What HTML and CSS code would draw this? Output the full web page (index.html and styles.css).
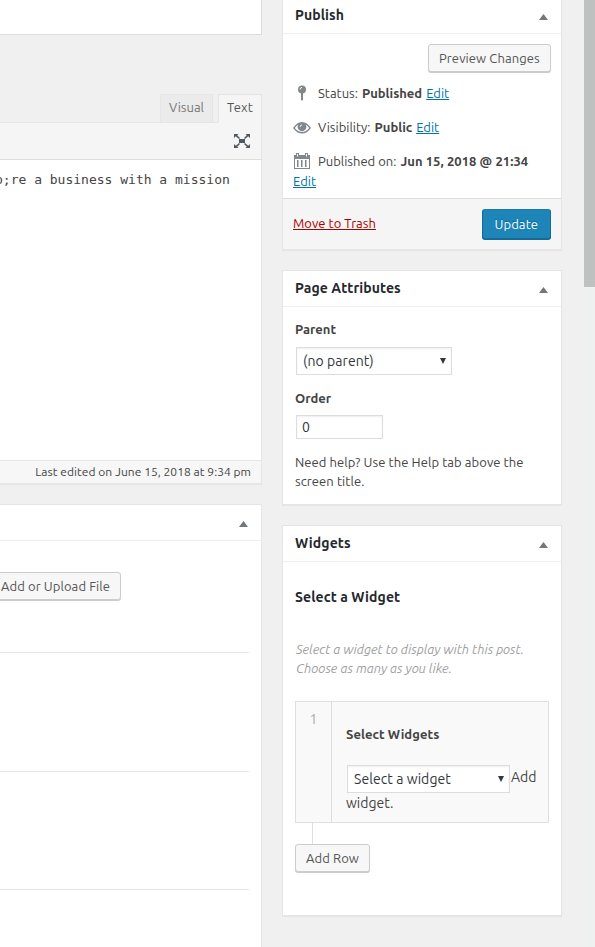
FILE: index.html
```html
<!DOCTYPE html>
<html lang="en">
<head>
<meta charset="utf-8">
<title>Edit Page</title>
<link rel="stylesheet" href="styles.css">
</head>
<body>
<div class="page">
  <main class="main-column">
    <div class="title-field"></div>
    <section class="editor">
      <div class="tabs">
        <span class="tab">Visual</span>
        <span class="tab tab-active">Text</span>
      </div>
      <div class="toolbar">
        <svg class="expand" viewBox="0 0 18 16" width="18" height="16"><path d="M6 6h6v4H6zM1 1h4.500L4.200 2.300 7 5 6 6 2.800 3.300 1 5zM17 1v4l-1.800-1.700L12 6l-1-1 2.800-2.700L12.500 1zM1 15v-4l1.800 1.700L6 10l1 1-2.800 2.700L5.500 15zM17 15h-4.500l1.300-1.300L11 11l1-1 3.200 2.700L17 11z"/></svg>
      </div>
      <div class="textarea"><span class="code">p;re a business with a mission</span></div>
      <div class="statusbar">Last edited on June 15, 2018 at 9:34 pm</div>
    </section>
    <section class="box files">
      <header class="box-head"><span></span><i class="arrow"></i></header>
      <div class="file-row file-first"><button class="button upload">Add or Upload File</button></div>
      <div class="file-row"></div>
      <div class="file-row file-short"></div>
    </section>
  </main>
  <aside class="side-column">
    <section class="box publish">
      <header class="box-head"><h2>Publish</h2><i class="arrow"></i></header>
      <div class="preview"><button class="button">Preview Changes</button></div>
      <div class="misc">
        <svg class="icon" viewBox="0 0 20 20" width="20" height="20"><circle cx="10" cy="6.500" r="4"/><path d="M9 10h2v6.500L10 18l-1-1.500z"/><path class="shine" d="M8 6.500Q8 4.600 10 4.400"/></svg>
        <span>Status:</span> <b>Published</b> <a>Edit</a>
      </div>
      <div class="misc">
        <svg class="icon" viewBox="0 0 20 20" width="20" height="20"><path fill-rule="evenodd" d="M1 11Q5 5 10 5t9 6q-4 5.500-9 5.500t-9-5.500zm1.800 0q3.200 4 7.200 4t7.200-4q-1.600-2.400-3.600-3.500a4.300 4.300 0 1 1-7.200 0Q4.400 8.600 2.800 11z"/><circle cx="10" cy="10" r="3.600"/><path class="shine" d="M8.200 9.800Q8.200 8 10 8"/></svg>
        <span>Visibility:</span> <b>Public</b> <a>Edit</a>
      </div>
      <div class="misc">
        <svg class="icon" viewBox="0 0 20 20" width="20" height="20"><path fill-rule="evenodd" d="M2 4h2V2h3v2h6V2h3v2h2v14H2zm1 4v9h14V8zM5 3v2.500h1V3zm9 0v2.500h1V3z"/><path d="M5 9h1.500v7H5zM9 9h1.500v7H9zM13 9h1.500v7H13z"/></svg>
        <span>Published on:</span> <b class="date">Jun 15, 2018 @ 21:34</b>
      </div>
      <div class="date-edit"><a>Edit</a></div>
      <footer class="actions"><a class="trash">Move to Trash</a><button class="button primary">Update</button></footer>
    </section>
    <section class="box attributes">
      <header class="box-head"><h2>Page Attributes</h2><i class="arrow"></i></header>
      <div class="attr-body">
        <div class="label"><b>Parent</b></div>
        <div class="select parent-select"><span>(no parent)</span><i class="caret"></i></div>
        <div class="label order-label"><b>Order</b></div>
        <div class="input">0</div>
        <p class="help">Need help? Use the Help tab above the<br>screen title.</p>
      </div>
    </section>
    <section class="box widgets">
      <header class="box-head"><h2>Widgets</h2><i class="arrow"></i></header>
      <div class="widgets-body">
        <h3>Select a Widget</h3>
        <p class="hint">Select a widget to display with this post.<br>Choose as many as you like.</p>
        <div class="repeater">
          <div class="order">1</div>
          <div class="fields">
            <div class="field-label"><b>Select Widgets</b></div>
            <div class="field-line"><div class="select"><span>Select a widget</span><i class="caret"></i></div><span>Add</span></div>
            <div class="field-tail">widget.</div>
          </div>
        </div>
        <div class="stem"></div>
        <button class="button add-row">Add Row</button>
      </div>
    </section>
  </aside>
  <div class="scroll-track"><div class="scroll-thumb"></div></div>
</div>
</body>
</html>
```
FILE: styles.css
```css
* { box-sizing: border-box; }
body {
  margin: 0;
  background: #f0f0f0;
  color: #444;
  font: 13px/20px Ubuntu, "Noto Sans", sans-serif;
}
h2, h3, p { margin: 0; }
h2, h3 { color: #23282d; font-size: 14px; font-weight: 600; letter-spacing: .09px; }
b { font-weight: 600; }
span, b, a, h2 { white-space: nowrap; }
a { color: #0073aa; text-decoration: underline; }
.page { display: flex; width: 595px; height: 947px; overflow: hidden; }
.main-column { width: 262px; overflow: hidden; }
.side-column { width: 280px; margin-left: 20px; }
.scroll-track { width: 11px; margin-left: 22px; background: #eff1f1; }
.scroll-thumb { height: 287px; background: #bfc1c0; }

.box { background: #fff; border: 1px solid #e5e5e5; box-shadow: 0 1px 1px rgba(0,0,0,.04); }
.box-head { display: flex; justify-content: space-between; height: 36px; padding: 0 13px 0 12px; border-bottom: 1px solid #eee; line-height: 34px; }
.arrow { width: 9px; height: 6px; margin-top: 16px; background: #72777c; clip-path: polygon(50% 0, 100% 100%, 0 100%); }

.title-field { height: 35px; background: #fff; border: 1px solid #ddd; border-width: 0 1px 1px 0; }
.tabs { display: flex; justify-content: flex-end; gap: 5px; height: 28px; margin-top: 59px; }
.tab { height: 28px; border: 1px solid #e5e5e5; border-bottom: 0; background: #ebebeb; color: #777; width: 53px; padding-left: 8px; line-height: 25px; }
.tab-active { position: relative; width: 44px; height: 29px; background: #f5f5f5; color: #555; letter-spacing: .1px; }
.toolbar { display: flex; justify-content: flex-end; height: 38px; padding: 10px 10px 0 0; background: #f5f5f5; border: 1px solid #e5e5e5; border-left: 0; border-bottom-color: #ddd; }
.expand { fill: #50575e; }
.textarea { height: 300px; background: #fff; border-right: 1px solid #e5e5e5; padding-top: 10px; color: #444; font: 13px/20px "DejaVu Sans Mono", monospace; }
.code { margin-left: -5px; }
.statusbar { height: 24px; background: #f7f7f7; border: 1px solid #e5e5e5; border-left: 0; text-align: right; padding-right: 10px; font-size: 12px; line-height: 21px; letter-spacing: .04px; box-shadow: 0 1px 1px rgba(0,0,0,.04); }
.files { margin-top: 20px; height: 460px; border-left: 0; }
.file-row { height: 119px; margin-right: 12px; border-bottom: 1px solid #e5e5e5; }
.file-first { height: 112px; padding-top: 31px; }
.file-short { height: 118px; }

.button { display: block; height: 28px; padding: 0 10px; border: 1px solid #ccc; border-radius: 3px; background: #f7f7f7; box-shadow: 0 1px 0 #ccc; color: #555; font: 13px/26px Ubuntu, "Noto Sans", sans-serif; letter-spacing: .09px; text-align: left; white-space: nowrap; }
.upload { width: 131px; margin-left: -10px; }
.add-row { width: 75px; }
.primary { width: 69px; height: 30px; padding-left: 11.5px; border-color: #1b78a8 #176a96 #176a96; background: #1e85b9; box-shadow: 0 1px 0 #176a96; color: #fff; line-height: 28px; text-shadow: 0 -1px 1px #006799; }

.publish { height: 250px; border-top: 0; }
.publish .box-head { height: 34px; line-height: 30px; }
.publish .arrow { margin-top: 14px; }
.preview { display: flex; justify-content: flex-end; padding: 10px 10px 0; height: 42px; }
.preview .button { width: 123px; }
.misc { display: flex; align-items: center; height: 34px; padding-left: 9px; gap: 4px; }
.misc .icon { fill: #82878c; margin-right: 2px; flex: none; }
.shine { fill: none; stroke: #fff; }
.date { letter-spacing: .06px; }
.date-edit { height: 27px; margin-top: -7px; padding-left: 10px; }
.actions { display: flex; justify-content: space-between; align-items: flex-start; height: 51px; padding: 10px 10px 0; border-top: 1px solid #ddd; background: #f5f5f5; }
.trash { color: #a00; line-height: 28px; letter-spacing: .04px; }

.attributes { margin-top: 20px; height: 235px; }
.attr-body { padding: 12px 12px 0; }
.label { height: 20px; }
.select { display: flex; align-items: center; justify-content: space-between; width: 156px; height: 28px; padding: 0 5px 0 6px; border: 1px solid #ddd; background: #fff; color: #32373c; font-size: 14px; letter-spacing: .07px; box-shadow: inset 0 1px 2px rgba(0,0,0,.07); }
.caret { width: 6px; height: 6px; background: #32373c; clip-path: polygon(0 0, 100% 0, 50% 100%); }
.parent-select { margin: 8px 0 0 1px; }
.order-label { margin-top: 13px; }
.input { width: 87px; height: 24px; margin: 7px 0 0 1px; padding-left: 5px; border: 1px solid #ddd; color: #32373c; font-size: 14px; line-height: 22px; box-shadow: inset 0 1px 2px rgba(0,0,0,.07); }
.help { margin-top: 14px; line-height: 19px; letter-spacing: .08px; }

.widgets { margin-top: 20px; height: 391px; }
.widgets-body { padding: 25px 12px 0; }
.widgets-body h3 { height: 20px; }
.hint { margin-top: 33px; padding-left: 1px; color: #a0a0a0; font-style: italic; line-height: 19px; }
.repeater { display: flex; width: 254px; height: 122px; margin-top: 23px; border: 1px solid #dfdfdf; background: #f9f9f9; }
.order { width: 36px; border-right: 1px solid #dfdfdf; padding-top: 7px; text-align: center; color: #aaa; font-size: 14px; }
.fields { flex: 1; padding: 22px 0 0 14px; font-size: 14px; }
.field-label { font-size: 13px; letter-spacing: .07px; }
.field-line { display: flex; margin: 21px 0 0 1px; line-height: 24px; gap: 1px; }
.field-line .select { width: 163px; }
.field-tail { line-height: 20px; }
.stem { width: 1px; height: 21px; margin-left: 17px; background: #dfdfdf; }
```
